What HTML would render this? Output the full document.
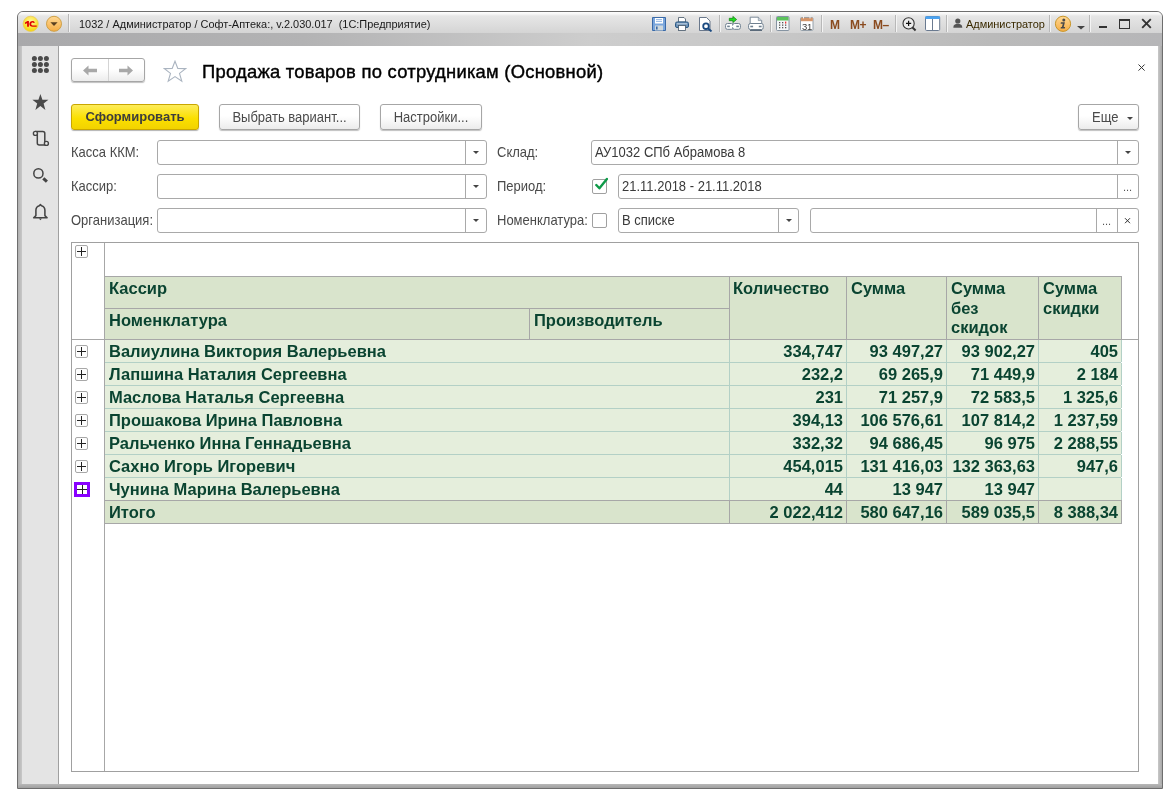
<!DOCTYPE html>
<html><head><meta charset="utf-8">
<style>
*{box-sizing:border-box;margin:0;padding:0}
html,body{width:1174px;height:797px;overflow:hidden;background:#fff;font-family:"Liberation Sans",sans-serif;position:relative}
.a{position:absolute}
#win{left:17px;top:11px;width:1146px;height:778px;border:1px solid #6e6e6e;border-radius:6px 6px 0 0;background:linear-gradient(#c9c9c9,#b4b4b4)}
#tbar{left:18px;top:12px;width:1144px;height:21px;border-radius:5px 5px 0 0;background:linear-gradient(#fdfdfd 0px,#f6f6f6 2px,#e6e6e6 4px,#dcdcdc 14px,#d4d4d4 21px)}
#strip{left:18px;top:33px;width:1144px;height:13px;background:linear-gradient(90deg,#a9a9ab 0%,#b3b3b4 25%,#cdcdcd 50%,#c8c8c8 65%,#bababa 85%,#b6b6b8 100%)}
#lframe{left:18px;top:46px;width:4px;height:738px;background:linear-gradient(90deg,#b0b0b0,#c8c8c8)}
#rframe{left:1158px;top:46px;width:4px;height:738px;background:linear-gradient(90deg,#c8c8c8,#a8a8a8)}
#bframe{left:18px;top:784px;width:1144px;height:4px;background:linear-gradient(#b8b8b8,#a0a0a0)}
#side{left:22px;top:46px;width:37px;height:738px;background:#e4e4e4;border-right:1px solid #a0a0a0}
#content{left:59px;top:46px;width:1099px;height:738px;background:#fff}
.ttl{font-size:10.95px;color:#1a1a1a;white-space:pre;line-height:13px}
.sep{width:1px;height:17px;top:15px;background:#b8b8b8;box-shadow:1px 0 0 #f4f4f4}
.lbl{font-size:13px;color:#4a4a4a;white-space:pre;line-height:15px;transform:scaleY(1.09);transform-origin:0 12px}
.inp{height:25px;border:1px solid #a9a9a9;border-radius:3px;background:#fff}
.dd{border-left:1px solid #a9a9a9}
.btn{border:1px solid #a6a6a6;border-radius:3px;background:linear-gradient(#fff 0%,#fff 45%,#ececec 100%);box-shadow:0 1px 1px rgba(0,0,0,.25);font-size:13px;color:#4a4a4a;text-align:center;line-height:23px;padding-top:1px;white-space:pre}
.sy{display:inline-block;transform:scaleY(1.07);transform-origin:0 75%}
.cb{width:15px;height:15px;border:1px solid #a0a0a0;border-radius:2px;background:#fff}
.tx{font-size:13px;color:#3a3a3a;white-space:pre;line-height:15px;transform:scaleY(1.07);transform-origin:0 12px}
.hd{background:#d9e4cc}
.rw{background:#e5eedc}
.t{font-size:16.5px;font-weight:bold;color:#0a4431;white-space:pre;line-height:19px}
.r{text-align:right}
.hl{background:#a7a7a7}
.tl{background:#b3d0c6}
.pb{width:13px;height:13px;border:1px solid #a8a8a8;border-radius:2px;background:#fdfdfd}
.pb:before{content:"";position:absolute;left:1px;top:5px;width:9px;height:1px;background:#222}
.pb:after{content:"";position:absolute;left:5px;top:1px;width:1px;height:9px;background:#222}
</style></head><body><div id="root" style="position:absolute;left:0;top:0;width:1174px;height:797px;will-change:transform">
<div id="win" class="a"></div>
<div id="tbar" class="a"></div>
<div id="strip" class="a"></div>
<div id="lframe" class="a"></div>
<div id="rframe" class="a"></div>
<div id="bframe" class="a"></div>
<div id="side" class="a"></div>
<div id="content" class="a"></div>


<!-- title bar icons -->
<svg class="a" style="left:22px;top:15px" width="18" height="18" viewBox="0 0 18 18">
<defs><radialGradient id="gy" cx="50%" cy="35%" r="65%"><stop offset="0" stop-color="#fff7a0"/><stop offset="1" stop-color="#f7d600"/></radialGradient>
<linearGradient id="go" x1="0" y1="0" x2="0" y2="1"><stop offset="0" stop-color="#ffd995"/><stop offset="1" stop-color="#f6ad45"/></linearGradient></defs>
<circle cx="8.7" cy="8.8" r="7.6" fill="url(#gy)" stroke="#e8c860" stroke-width="0.8"/>
<path d="M3 7.6L5.4 6H6.9V11.8H5.1V8.2L3 9Z" fill="#e00000"/><path d="M13 7.6C12.6 6.5 11.6 6 10.5 6C8.6 6 7.4 7.3 7.4 9C7.4 10.7 8.6 11.8 10.5 11.8H14.7V10.4H10.6C9.7 10.4 9.2 9.8 9.2 9C9.2 8.1 9.8 7.4 10.6 7.4C11.1 7.4 11.4 7.7 11.6 8.1Z" fill="#e00000"/>
</svg>
<svg class="a" style="left:45px;top:15px" width="18" height="18" viewBox="0 0 18 18">
<circle cx="9" cy="8.8" r="7.5" fill="url(#go)" stroke="#c89a3c" stroke-width="0.9"/>
<path d="M5.4 7.2H12.6L9 11Z" fill="#5a4020"/>
</svg>
<div class="a sep" style="left:68px;top:14px;height:18px"></div>

<!-- save -->
<svg class="a" style="left:652px;top:17px" width="14" height="14" viewBox="0 0 14 14">
<path d="M0.5 0.5H13.5V13.5H0.5Z" fill="#7aa6dc" stroke="#3a6aa8" stroke-width="1"/>
<rect x="3" y="1" width="8" height="5.5" fill="#fff"/>
<path d="M4 2.6H10M4 4.4H10" stroke="#7aa6dc" stroke-width="0.8"/>
<rect x="3" y="8.5" width="8" height="5" fill="#cfd8dc"/>
<rect x="4" y="9.5" width="1.6" height="3" fill="#3a6aa8"/>
</svg>
<!-- print -->
<svg class="a" style="left:675px;top:17px" width="14" height="14" viewBox="0 0 14 14">
<path d="M3.5 0.5H9L10.5 2V5H3.5Z" fill="#fff" stroke="#456" stroke-width="0.8"/>
<rect x="0.5" y="5" width="13" height="5.5" rx="1.5" fill="#6f93b8" stroke="#2d5a85" stroke-width="1"/>
<path d="M2 6.8H12" stroke="#fff" stroke-width="0.6"/>
<rect x="3.5" y="8.5" width="7" height="5" fill="#fff" stroke="#456" stroke-width="0.8"/>
</svg>
<!-- preview -->
<svg class="a" style="left:699px;top:17px" width="15" height="15" viewBox="0 0 15 15">
<path d="M0.5 0.5H7.5L11 4V13.5H0.5Z" fill="#fff" stroke="#5a6a80" stroke-width="0.9"/>
<circle cx="7" cy="9.2" r="2.8" fill="#fff" stroke="#1a4a80" stroke-width="1.8"/>
<path d="M9.2 11.4L12.5 14.4" stroke="#1a4a80" stroke-width="2"/>
</svg>
<div class="a sep" style="left:719px"></div>
<!-- export -->
<svg class="a" style="left:722px;top:13px" width="46" height="20" viewBox="0 0 46 20">
<path d="M7.3 5.3H10.9V3.4L14.6 6.5L10.9 9.6V7.7H7.3Z" fill="#22dd22" stroke="#0a7a0a" stroke-width="0.7" stroke-linejoin="round"/>
<rect x="3.6" y="10.5" width="7.8" height="5.8" rx="1.8" fill="#fff" stroke="#6f8090" stroke-width="1"/>
<rect x="10.6" y="10.5" width="7.8" height="5.8" rx="1.8" fill="#fff" stroke="#6f8090" stroke-width="1"/>
<rect x="5.2" y="12.6" width="2.6" height="1.6" fill="#6f8090"/>
<rect x="14.3" y="12.6" width="2.6" height="1.6" fill="#6f8090"/>
<rect x="8.6" y="12.7" width="4.8" height="1.4" fill="#fff"/>
<path d="M28.2 4.2H36.3L39.7 7.6V11H28.2Z" fill="#fff" stroke="#6f8090" stroke-width="0.9"/>
<path d="M36.3 4.2V7.6H39.7" fill="#c8d0d8" stroke="#6f8090" stroke-width="0.6"/>
<rect x="26.6" y="10.5" width="14.6" height="6" rx="1.8" fill="#fff" stroke="#6f8090" stroke-width="1"/>
<rect x="28.3" y="12.7" width="2.8" height="1.6" fill="#6f8090"/>
<rect x="36.8" y="12.7" width="2.8" height="1.6" fill="#6f8090"/>
<path d="M28 17.4H40" stroke="#5a6a7a" stroke-width="1.2"/>
</svg>
<div class="a sep" style="left:770px"></div>
<!-- calculator -->
<svg class="a" style="left:776px;top:16px" width="14" height="15" viewBox="0 0 14 15">
<rect x="0.5" y="0.5" width="12.5" height="14" rx="1" fill="#f4f6f8" stroke="#7a8a9a" stroke-width="0.9"/>
<rect x="1" y="1" width="11.5" height="3.5" fill="#5cc35c"/>
<g fill="#555"><rect x="3" y="6" width="1.3" height="1.3"/><rect x="6" y="6" width="1.3" height="1.3"/><rect x="3" y="8.5" width="1.3" height="1.3"/><rect x="6" y="8.5" width="1.3" height="1.3"/><rect x="3" y="11" width="1.3" height="1.3"/><rect x="6" y="11" width="1.3" height="1.3"/><rect x="9" y="8.5" width="1.3" height="1.3"/><rect x="9" y="11" width="1.3" height="1.3"/></g>
<rect x="9" y="5.6" width="1.3" height="2" fill="#e33"/>
</svg>
<!-- calendar -->
<svg class="a" style="left:800px;top:16px" width="14" height="15" viewBox="0 0 14 15">
<rect x="0.5" y="1.5" width="12.5" height="13" rx="1.2" fill="#fff" stroke="#8a96a2" stroke-width="0.9"/>
<rect x="0.8" y="1.8" width="12" height="3.4" fill="#d4956a"/>
<path d="M3.5 0.5V2.5M10 0.5V2.5" stroke="#fff" stroke-width="0.9"/>
<text x="6.9" y="13.6" font-family="Liberation Sans" font-size="9.5" text-anchor="middle" fill="#3a3a3a" letter-spacing="-0.4">31</text>
</svg>
<div class="a sep" style="left:821px"></div>
<div class="a" style="left:830px;top:17.5px;font-size:12px;font-weight:bold;color:#8a4a1e;line-height:14px;white-space:pre">M</div>
<div class="a" style="left:850px;top:17.5px;font-size:12px;font-weight:bold;color:#8a4a1e;line-height:14px;white-space:pre;letter-spacing:-0.5px">M+</div>
<div class="a" style="left:873px;top:17.5px;font-size:12px;font-weight:bold;color:#8a4a1e;line-height:14px;white-space:pre;letter-spacing:-0.5px">M–</div>
<div class="a sep" style="left:895px"></div>
<!-- zoom -->
<svg class="a" style="left:901px;top:17px" width="17" height="15" viewBox="0 0 17 15">
<circle cx="7.6" cy="6.4" r="5.6" fill="#ececec" stroke="#333" stroke-width="1.1"/>
<path d="M5 6.4H10.2M7.6 3.8V9" stroke="#111" stroke-width="1.2"/>
<path d="M11.5 10.5L14.6 13.4" stroke="#333" stroke-width="2"/>
</svg>
<!-- panel -->
<svg class="a" style="left:925px;top:16px" width="16" height="15" viewBox="0 0 16 15">
<rect x="0.5" y="0.5" width="14.2" height="14" rx="1.2" fill="#fff" stroke="#6a7a90" stroke-width="1"/>
<rect x="0.2" y="0.2" width="14.8" height="2.9" rx="1" fill="#4aa2f0"/>
<path d="M7.5 3V14.5" stroke="#6a7a90" stroke-width="1"/>
</svg>
<div class="a sep" style="left:946px"></div>
<svg class="a" style="left:953px;top:18px" width="10" height="10" viewBox="0 0 10 10">
<circle cx="4.8" cy="3" r="2.6" fill="#555"/>
<path d="M0.3 9.8C0.3 6.8 2 5.8 4.8 5.8C7.6 5.8 9.3 6.8 9.3 9.8Z" fill="#555"/>
</svg>
<div class="a ttl" style="left:966px;top:18px;color:#3a2a00">Администратор</div>
<div class="a sep" style="left:1049px"></div>
<svg class="a" style="left:1054px;top:15px" width="18" height="18" viewBox="0 0 18 18">
<circle cx="9" cy="8.8" r="7.6" fill="url(#go)" stroke="#c8962a" stroke-width="1"/>
<circle cx="9.8" cy="4.9" r="1.5" fill="#4a4a4a"/>
<path d="M6.9 7.3H10.9L9.7 12H11.1L10.8 13.4H6.6L6.9 12H7.9L8.8 8.7H6.6Z" fill="#4a4a4a"/>
</svg>
<svg class="a" style="left:1077px;top:26px" width="8" height="4" viewBox="0 0 8 4"><path d="M0 0H8L4 3.6Z" fill="#444"/></svg>
<div class="a sep" style="left:1089px"></div>
<div class="a" style="left:1099px;top:26px;width:8px;height:2px;background:#333"></div>
<div class="a" style="left:1119px;top:19px;width:11px;height:10px;border:1.3px solid #333;border-top-width:2px"></div>
<svg class="a" style="left:1141px;top:18px" width="11" height="11" viewBox="0 0 11 11"><path d="M1.2 1.2L9.8 9.8M9.8 1.2L1.2 9.8" stroke="#333" stroke-width="1.9"/></svg>

<!-- sidebar icons -->
<svg class="a" style="left:30px;top:54px" width="20" height="20" viewBox="0 0 20 20" fill="#4a4a4a">
<circle cx="4.4" cy="4.4" r="2.5"/><circle cx="10.4" cy="4.4" r="2.5"/><circle cx="16.4" cy="4.4" r="2.5"/>
<circle cx="4.4" cy="10.4" r="2.5"/><circle cx="10.4" cy="10.4" r="2.5"/><circle cx="16.4" cy="10.4" r="2.5"/>
<circle cx="4.4" cy="16.4" r="2.5"/><circle cx="10.4" cy="16.4" r="2.5"/><circle cx="16.4" cy="16.4" r="2.5"/>
</svg>
<svg class="a" style="left:30px;top:92px" width="20" height="20" viewBox="0 0 20 20">
<path d="M10.4 2L12.4 7.8H18.4L13.6 11.4L15.4 17.9L10.4 14L5.4 17.9L7.2 11.4L2.4 7.8H8.4Z" fill="#4a4a4a"/>
</svg>
<svg class="a" style="left:30px;top:128px" width="22" height="22" viewBox="0 0 22 22">
<path d="M5.4 3.5H12.8Q14.8 3.5 14.8 5.5V15.5M7.3 5.5V15Q7.3 17 9.3 17H16.4" fill="none" stroke="#444" stroke-width="1.5"/>
<circle cx="5.4" cy="5.4" r="2" fill="#e8e8e8" stroke="#444" stroke-width="1.4"/>
<circle cx="16.4" cy="15.4" r="2" fill="#e8e8e8" stroke="#444" stroke-width="1.4"/>
</svg>
<svg class="a" style="left:30px;top:164px" width="22" height="22" viewBox="0 0 22 22">
<circle cx="8.4" cy="9.4" r="4.6" fill="none" stroke="#444" stroke-width="1.5"/>
<path d="M13.3 14.3L16.9 17.7" stroke="#444" stroke-width="3"/>
</svg>
<svg class="a" style="left:30px;top:201px" width="22" height="22" viewBox="0 0 22 22">
<path d="M10.4 3.6L9.3 4.7C7.1 5.3 5.9 6.9 5.9 9.3V14.6L3.7 16.7H17.1L14.9 14.6V9.3C14.9 6.9 13.7 5.3 11.5 4.7Z" fill="none" stroke="#444" stroke-width="1.55" stroke-linejoin="round"/>
<path d="M8.9 17.4H11.9L10.4 19.3Z" fill="#444"/>
</svg>

<!-- title bar -->
<div class="a ttl" style="left:79px;top:18px">1032 / Администратор / Софт-Аптека:, v.2.030.017  (1С:Предприятие)</div>

<!-- form title -->
<div class="a" style="left:202px;top:60px;font-size:18.4px;color:#000;white-space:pre;line-height:23px;letter-spacing:0.25px;-webkit-text-stroke:0.4px #000">Продажа товаров по сотрудникам (Основной)</div>


<!-- nav group -->
<div class="a btn" style="left:71px;top:58px;width:74px;height:24px"></div>
<div class="a" style="left:108px;top:59px;width:1px;height:22px;background:#d4d4d4"></div>
<svg class="a" style="left:83px;top:65px" width="15" height="11" viewBox="0 0 15 11"><path d="M0 5.5L5.5 0.5V3.8H14V7.2H5.5V10.5Z" fill="#a8a8a8"/></svg>
<svg class="a" style="left:118px;top:65px" width="15" height="11" viewBox="0 0 15 11"><path d="M15 5.5L9.5 0.5V3.8H1V7.2H9.5V10.5Z" fill="#a8a8a8"/></svg>
<svg class="a" style="left:163px;top:60px" width="24" height="23" viewBox="0 0 24 23"><path d="M12 1.2L14.8 8.4L22.6 8.6L16.5 13.4L18.8 21.2L12 16.6L5.2 21.2L7.5 13.4L1.4 8.6L9.2 8.4Z" fill="none" stroke="#aab4c0" stroke-width="1.1" stroke-linejoin="miter"/></svg>
<!-- close x -->
<svg class="a" style="left:1137px;top:63px" width="9" height="9" viewBox="0 0 9 9"><path d="M1.5 1.5L7.6 7.6M7.6 1.5L1.5 7.6" stroke="#333" stroke-width="1"/></svg>

<!-- command bar -->
<div class="a" style="left:71px;top:104px;width:128px;height:26px;border:1px solid #c9a600;border-radius:3px;background:linear-gradient(#fdec5a 0%,#fbe000 55%,#f2d200 100%);box-shadow:0 1px 1px rgba(0,0,0,.3);font-size:13px;font-weight:bold;color:#3d3d3d;text-align:center;line-height:24px">Сформировать</div>
<div class="a btn" style="left:219px;top:104px;width:141px;height:26px"><span class="sy">Выбрать вариант...</span></div>
<div class="a btn" style="left:380px;top:104px;width:102px;height:26px"><span class="sy">Настройки...</span></div>
<div class="a btn" style="left:1078px;top:104px;width:61px;height:26px;text-align:left;padding-left:13px"><span class="sy">Еще</span></div>
<svg class="a" style="left:1127px;top:117px" width="6" height="3" viewBox="0 0 6 3"><path d="M0 0H6L3 3Z" fill="#444"/></svg>

<!-- fields row 1 -->
<div class="a lbl" style="left:71px;top:145px">Касса ККМ:</div>
<div class="a inp" style="left:157px;top:140px;width:330px"></div>
<div class="a dd" style="left:465px;top:141px;height:23px"></div>
<svg class="a" style="left:473px;top:151px" width="6" height="3" viewBox="0 0 6 3"><path d="M0 0H6L3 3Z" fill="#444"/></svg>
<div class="a lbl" style="left:497px;top:145px">Склад:</div>
<div class="a inp" style="left:591px;top:140px;width:548px"></div>
<div class="a tx" style="left:595px;top:145px">АУ1032 СПб Абрамова 8</div>
<div class="a dd" style="left:1117px;top:141px;height:23px"></div>
<svg class="a" style="left:1125px;top:151px" width="6" height="3" viewBox="0 0 6 3"><path d="M0 0H6L3 3Z" fill="#444"/></svg>

<!-- fields row 2 -->
<div class="a lbl" style="left:71px;top:179px">Кассир:</div>
<div class="a inp" style="left:157px;top:174px;width:330px"></div>
<div class="a dd" style="left:465px;top:175px;height:23px"></div>
<svg class="a" style="left:473px;top:185px" width="6" height="3" viewBox="0 0 6 3"><path d="M0 0H6L3 3Z" fill="#444"/></svg>
<div class="a lbl" style="left:497px;top:179px">Период:</div>
<div class="a cb" style="left:592px;top:179px"></div>
<svg class="a" style="left:593px;top:176px" width="15" height="15" viewBox="0 0 15 15"><path d="M3.3 9L6.4 12.3L13.9 3" fill="none" stroke="#0e9a48" stroke-width="2.4" stroke-linecap="round" stroke-linejoin="round"/></svg>
<div class="a inp" style="left:618px;top:174px;width:521px"></div>
<div class="a tx" style="left:622px;top:179px">21.11.2018 - 21.11.2018</div>
<div class="a dd" style="left:1117px;top:175px;height:23px"></div>
<div class="a tx" style="left:1123px;top:180px;font-size:11px;color:#555">...</div>

<!-- fields row 3 -->
<div class="a lbl" style="left:71px;top:213px">Организация:</div>
<div class="a inp" style="left:157px;top:208px;width:330px"></div>
<div class="a dd" style="left:465px;top:209px;height:23px"></div>
<svg class="a" style="left:473px;top:219px" width="6" height="3" viewBox="0 0 6 3"><path d="M0 0H6L3 3Z" fill="#444"/></svg>
<div class="a lbl" style="left:497px;top:213px">Номенклатура:</div>
<div class="a cb" style="left:592px;top:213px"></div>
<div class="a inp" style="left:618px;top:208px;width:181px"></div>
<div class="a tx" style="left:622px;top:213px">В списке</div>
<div class="a dd" style="left:778px;top:209px;height:23px"></div>
<svg class="a" style="left:786px;top:219px" width="6" height="3" viewBox="0 0 6 3"><path d="M0 0H6L3 3Z" fill="#444"/></svg>
<div class="a inp" style="left:810px;top:208px;width:329px"></div>
<div class="a dd" style="left:1096px;top:209px;height:23px"></div>
<div class="a tx" style="left:1102px;top:214px;font-size:11px;color:#555">...</div>
<div class="a dd" style="left:1117px;top:209px;height:23px"></div>
<svg class="a" style="left:1124px;top:217px" width="7" height="7" viewBox="0 0 7 7"><path d="M1 1.2L6 6.2M6 1.2L1 6.2" stroke="#333" stroke-width="1"/></svg>

<!-- report -->
<div class="a" style="left:71px;top:242px;width:1068px;height:530px;border:1px solid #a0a0a0;background:#fff"></div>
<div class="a hl" style="left:104px;top:243px;width:1px;height:528px"></div>
<div class="a pb" style="left:75px;top:245px"></div>
<div class="a hd" style="left:105px;top:276px;width:1016px;height:63px"></div>
<div class="a hl" style="left:104px;top:276px;width:1018px;height:1px"></div>
<div class="a hl" style="left:105px;top:308px;width:624px;height:1px"></div>
<div class="a hl" style="left:529px;top:308px;width:1px;height:31px"></div>
<div class="a hl" style="left:729px;top:276px;width:1px;height:63px"></div>
<div class="a hl" style="left:846px;top:276px;width:1px;height:63px"></div>
<div class="a hl" style="left:946px;top:276px;width:1px;height:63px"></div>
<div class="a hl" style="left:1038px;top:276px;width:1px;height:63px"></div>
<div class="a hl" style="left:1121px;top:276px;width:1px;height:63px"></div>
<div class="a hl" style="left:72px;top:339px;width:1066px;height:1px"></div>
<div class="a t" style="left:109px;top:279px;">Кассир</div>
<div class="a t" style="left:109px;top:311px;">Номенклатура</div>
<div class="a t" style="left:534px;top:311px;">Производитель</div>
<div class="a t" style="left:733px;top:279px;">Количество</div>
<div class="a t" style="left:851px;top:279px;">Сумма</div>
<div class="a t" style="left:951px;top:279px;">Сумма</div>
<div class="a t" style="left:951px;top:298.5px;">без</div>
<div class="a t" style="left:951px;top:318px;">скидок</div>
<div class="a t" style="left:1043px;top:279px;">Сумма</div>
<div class="a t" style="left:1043px;top:298.5px;">скидки</div>
<div class="a rw" style="left:105px;top:340px;width:1016px;height:22px"></div>
<div class="a tl" style="left:105px;top:362px;width:1016px;height:1px"></div>
<div class="a tl" style="left:729px;top:340px;width:1px;height:22px"></div>
<div class="a tl" style="left:846px;top:340px;width:1px;height:22px"></div>
<div class="a tl" style="left:946px;top:340px;width:1px;height:22px"></div>
<div class="a tl" style="left:1038px;top:340px;width:1px;height:22px"></div>
<div class="a tl" style="left:1121px;top:340px;width:1px;height:22px"></div>
<div class="a t" style="left:109px;top:342px;">Валиулина Виктория Валерьевна</div>
<div class="a t" style="right:331px;top:342px">334,747</div>
<div class="a t" style="right:231px;top:342px">93 497,27</div>
<div class="a t" style="right:139px;top:342px">93 902,27</div>
<div class="a t" style="right:56px;top:342px">405</div>
<div class="a pb" style="left:75px;top:345px"></div>
<div class="a rw" style="left:105px;top:363px;width:1016px;height:22px"></div>
<div class="a tl" style="left:105px;top:385px;width:1016px;height:1px"></div>
<div class="a tl" style="left:729px;top:363px;width:1px;height:22px"></div>
<div class="a tl" style="left:846px;top:363px;width:1px;height:22px"></div>
<div class="a tl" style="left:946px;top:363px;width:1px;height:22px"></div>
<div class="a tl" style="left:1038px;top:363px;width:1px;height:22px"></div>
<div class="a tl" style="left:1121px;top:363px;width:1px;height:22px"></div>
<div class="a t" style="left:109px;top:365px;">Лапшина Наталия Сергеевна</div>
<div class="a t" style="right:331px;top:365px">232,2</div>
<div class="a t" style="right:231px;top:365px">69 265,9</div>
<div class="a t" style="right:139px;top:365px">71 449,9</div>
<div class="a t" style="right:56px;top:365px">2 184</div>
<div class="a pb" style="left:75px;top:368px"></div>
<div class="a rw" style="left:105px;top:386px;width:1016px;height:22px"></div>
<div class="a tl" style="left:105px;top:408px;width:1016px;height:1px"></div>
<div class="a tl" style="left:729px;top:386px;width:1px;height:22px"></div>
<div class="a tl" style="left:846px;top:386px;width:1px;height:22px"></div>
<div class="a tl" style="left:946px;top:386px;width:1px;height:22px"></div>
<div class="a tl" style="left:1038px;top:386px;width:1px;height:22px"></div>
<div class="a tl" style="left:1121px;top:386px;width:1px;height:22px"></div>
<div class="a t" style="left:109px;top:388px;">Маслова Наталья Сергеевна</div>
<div class="a t" style="right:331px;top:388px">231</div>
<div class="a t" style="right:231px;top:388px">71 257,9</div>
<div class="a t" style="right:139px;top:388px">72 583,5</div>
<div class="a t" style="right:56px;top:388px">1 325,6</div>
<div class="a pb" style="left:75px;top:391px"></div>
<div class="a rw" style="left:105px;top:409px;width:1016px;height:22px"></div>
<div class="a tl" style="left:105px;top:431px;width:1016px;height:1px"></div>
<div class="a tl" style="left:729px;top:409px;width:1px;height:22px"></div>
<div class="a tl" style="left:846px;top:409px;width:1px;height:22px"></div>
<div class="a tl" style="left:946px;top:409px;width:1px;height:22px"></div>
<div class="a tl" style="left:1038px;top:409px;width:1px;height:22px"></div>
<div class="a tl" style="left:1121px;top:409px;width:1px;height:22px"></div>
<div class="a t" style="left:109px;top:411px;">Прошакова Ирина Павловна</div>
<div class="a t" style="right:331px;top:411px">394,13</div>
<div class="a t" style="right:231px;top:411px">106 576,61</div>
<div class="a t" style="right:139px;top:411px">107 814,2</div>
<div class="a t" style="right:56px;top:411px">1 237,59</div>
<div class="a pb" style="left:75px;top:414px"></div>
<div class="a rw" style="left:105px;top:432px;width:1016px;height:22px"></div>
<div class="a tl" style="left:105px;top:454px;width:1016px;height:1px"></div>
<div class="a tl" style="left:729px;top:432px;width:1px;height:22px"></div>
<div class="a tl" style="left:846px;top:432px;width:1px;height:22px"></div>
<div class="a tl" style="left:946px;top:432px;width:1px;height:22px"></div>
<div class="a tl" style="left:1038px;top:432px;width:1px;height:22px"></div>
<div class="a tl" style="left:1121px;top:432px;width:1px;height:22px"></div>
<div class="a t" style="left:109px;top:434px;">Ральченко Инна Геннадьевна</div>
<div class="a t" style="right:331px;top:434px">332,32</div>
<div class="a t" style="right:231px;top:434px">94 686,45</div>
<div class="a t" style="right:139px;top:434px">96 975</div>
<div class="a t" style="right:56px;top:434px">2 288,55</div>
<div class="a pb" style="left:75px;top:437px"></div>
<div class="a rw" style="left:105px;top:455px;width:1016px;height:22px"></div>
<div class="a tl" style="left:105px;top:477px;width:1016px;height:1px"></div>
<div class="a tl" style="left:729px;top:455px;width:1px;height:22px"></div>
<div class="a tl" style="left:846px;top:455px;width:1px;height:22px"></div>
<div class="a tl" style="left:946px;top:455px;width:1px;height:22px"></div>
<div class="a tl" style="left:1038px;top:455px;width:1px;height:22px"></div>
<div class="a tl" style="left:1121px;top:455px;width:1px;height:22px"></div>
<div class="a t" style="left:109px;top:457px;">Сахно Игорь Игоревич</div>
<div class="a t" style="right:331px;top:457px">454,015</div>
<div class="a t" style="right:231px;top:457px">131 416,03</div>
<div class="a t" style="right:139px;top:457px">132 363,63</div>
<div class="a t" style="right:56px;top:457px">947,6</div>
<div class="a pb" style="left:75px;top:460px"></div>
<div class="a rw" style="left:105px;top:478px;width:1016px;height:22px"></div>
<div class="a tl" style="left:105px;top:500px;width:1016px;height:1px"></div>
<div class="a tl" style="left:729px;top:478px;width:1px;height:22px"></div>
<div class="a tl" style="left:846px;top:478px;width:1px;height:22px"></div>
<div class="a tl" style="left:946px;top:478px;width:1px;height:22px"></div>
<div class="a tl" style="left:1038px;top:478px;width:1px;height:22px"></div>
<div class="a tl" style="left:1121px;top:478px;width:1px;height:22px"></div>
<div class="a t" style="left:109px;top:480px;">Чунина Марина Валерьевна</div>
<div class="a t" style="right:331px;top:480px">44</div>
<div class="a t" style="right:231px;top:480px">13 947</div>
<div class="a t" style="right:139px;top:480px">13 947</div>
<div class="a hd" style="left:105px;top:501px;width:1016px;height:22px"></div>
<div class="a hl" style="left:105px;top:500px;width:1016px;height:1px"></div>
<div class="a hl" style="left:104px;top:523px;width:1018px;height:1px"></div>
<div class="a hl" style="left:729px;top:500px;width:1px;height:23px"></div>
<div class="a hl" style="left:846px;top:500px;width:1px;height:23px"></div>
<div class="a hl" style="left:946px;top:500px;width:1px;height:23px"></div>
<div class="a hl" style="left:1038px;top:500px;width:1px;height:23px"></div>
<div class="a hl" style="left:1121px;top:500px;width:1px;height:23px"></div>
<div class="a t" style="left:109px;top:503px;">Итого</div>
<div class="a t" style="right:331px;top:503px">2 022,412</div>
<div class="a t" style="right:231px;top:503px">580 647,16</div>
<div class="a t" style="right:139px;top:503px">589 035,5</div>
<div class="a t" style="right:56px;top:503px">8 388,34</div>
<div class="a" style="left:74px;top:482px;width:16px;height:15px;border:3px solid #8800ff;background:#fff"></div>
<div class="a" style="left:77px;top:489px;width:10px;height:1px;background:#222"></div>
<div class="a" style="left:82px;top:485px;width:1px;height:9px;background:#222"></div>
</div></body></html>
